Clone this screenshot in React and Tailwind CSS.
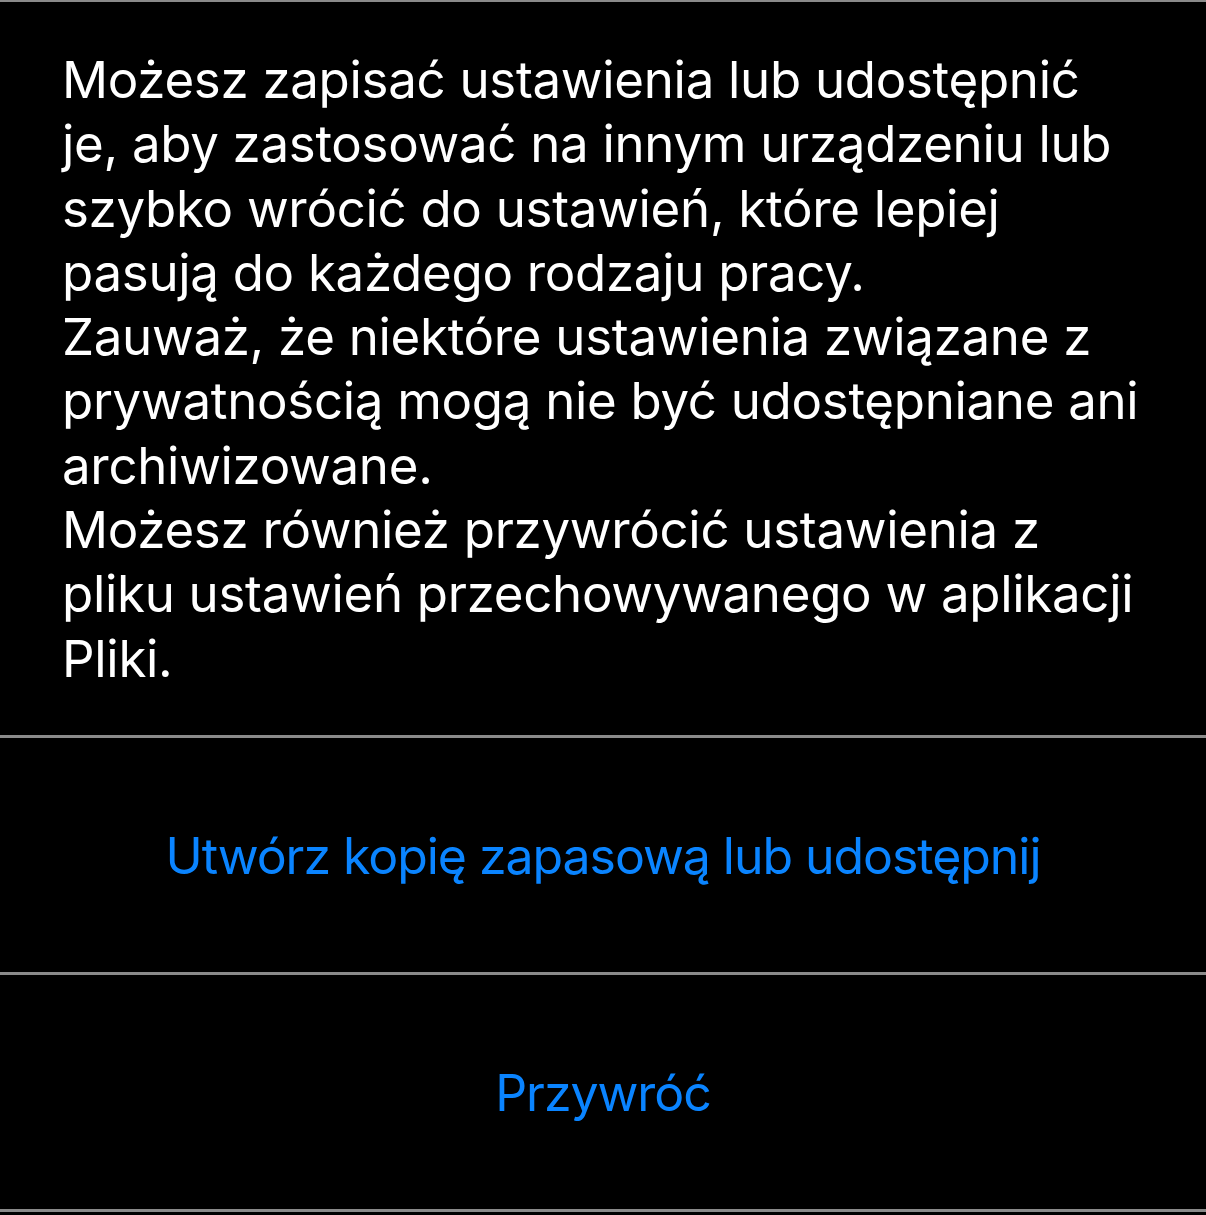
export default function App() {
  const font = { fontFamily: 'Inter, "Noto Sans", sans-serif' };
  return (
    <div className="w-[1206px] h-[1215px] bg-black overflow-hidden" style={font}>
      <div className="h-[2px] bg-[#8a8a8a]" />
      <div className="pl-[62px] pr-[58px] pt-[46px] pb-[44px] text-white text-[51px] leading-[64.3px] tracking-[-0.3px]">
        <p>
          Możesz zapisać ustawienia lub udostępnić je, aby zastosować na innym urządzeniu lub szybko wrócić do ustawień, które lepiej pasują do każdego rodzaju pracy.
        </p>
        <p>
          Zauważ, że niektóre ustawienia związane z prywatnością mogą nie być udostępniane ani archiwizowane.
        </p>
        <p>
          Możesz również przywrócić ustawienia z pliku ustawień przechowywanego w aplikacji Pliki.
        </p>
      </div>
      <div className="h-[3px] bg-[#8a8a8a]" />
      <div className="h-[234px] flex items-center justify-center pt-[4px] text-[#0a84ff] text-[50px] tracking-[-1.05px]">
        Utwórz kopię zapasową lub udostępnij
      </div>
      <div className="h-[3px] bg-[#8a8a8a]" />
      <div className="h-[234px] flex items-center justify-center pt-[4px] text-[#0a84ff] text-[50px] tracking-[-1.05px]">
        Przywróć
      </div>
      <div className="h-[3px] bg-[#8a8a8a]" />
    </div>
  );
}
